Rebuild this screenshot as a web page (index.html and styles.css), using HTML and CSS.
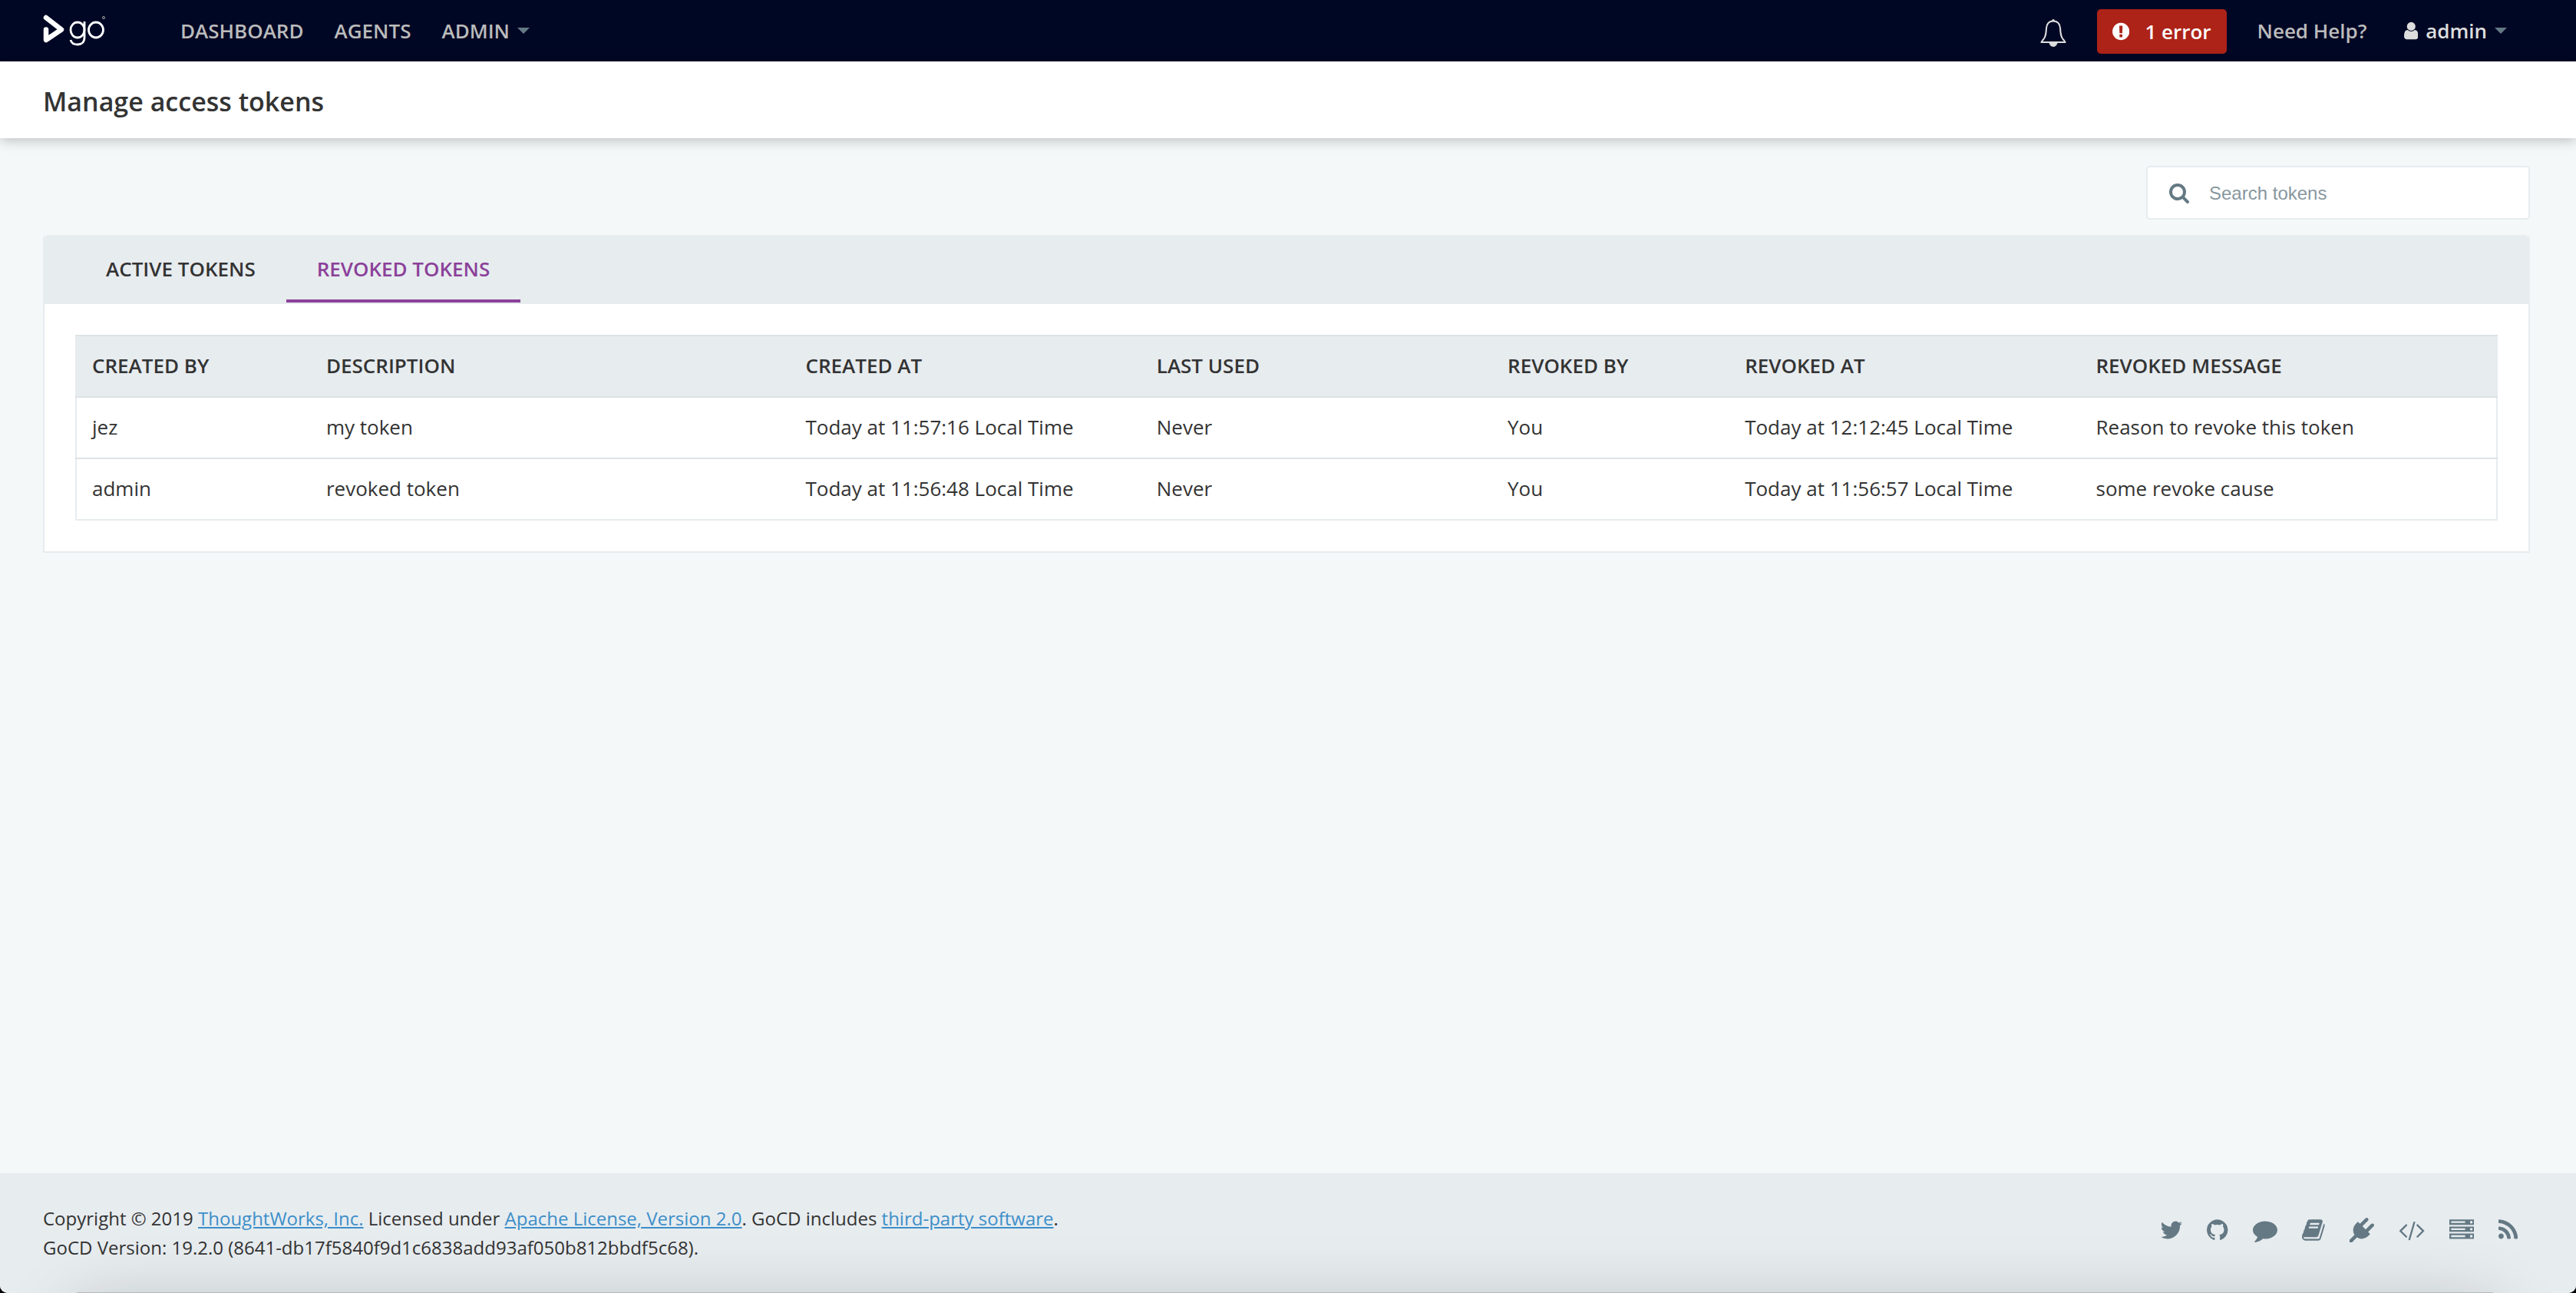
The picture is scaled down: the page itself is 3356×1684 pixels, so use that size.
FILE: index.html
```html
<!DOCTYPE html>
<html lang="en">
<head>
<meta charset="UTF-8">
<title>Manage access tokens - Go</title>
<link rel="stylesheet" href="styles.css">
</head>
<body>

<header class="site-header">
	<a class="logo" href="#" aria-label="Go">
		<svg viewBox="0 0 82 42">
			<path d="M4 4 L24 19.500 L4 33 L4 19.500" fill="none" stroke="#fff" stroke-width="6.500" stroke-linecap="round" stroke-linejoin="round"/>
			<g fill="none" stroke="#fff" stroke-width="2.800">
				<ellipse cx="45" cy="20" rx="9" ry="10"/>
				<path d="M54 9v21c0 6-4 9-9 9s-8-2-9-6"/>
				<ellipse cx="69" cy="20" rx="9.500" ry="10"/>
			</g>
			<circle cx="79" cy="4" r="1.500" fill="none" stroke="#aaa" stroke-width="1"/>
		</svg>
	</a>
	<nav class="main-nav">
		<a href="#">DASHBOARD</a>
		<a href="#">AGENTS</a>
		<a class="has-caret" href="#">ADMIN</a>
	</nav>
	<div class="user-nav">
		<button class="bell" aria-label="Notifications">
			<svg viewBox="0 0 34 38">
				<path d="M17 3.500c-6 0-8.500 4-9 9-.5 8-1 12-4 15-1 1.200-2.500 2.500-2.500 3.500h31c0-1-1.500-2.300-2.500-3.500-3-3-3.500-7-4-15-.5-5-3-9-9-9z" fill="none" stroke="#ddd" stroke-width="2"/>
				<path d="M15 4a2 3 0 0 1 4 0zM11.500 31h11a5.500 6 0 0 1-11 0z" fill="#ddd"/>
			</svg>
		</button>
		<button class="error-btn">
			<svg class="icon" viewBox="128 0 1536 1792"><path d="M896 128q209 0 385.500 103t279.500 279.500 103 385.500-103 385.500-279.500 279.500-385.500 103-385.500-103-279.500-279.500-103-385.500 103-385.500 279.500-279.500 385.500-103zm128 1247v-190q0-14-9-23.500t-22-9.500h-192q-13 0-23 10t-10 23v190q0 13 10 23t23 10h192q13 0 22-9.500t9-23.500zm-2-344l18-621q0-12-10-18-10-8-24-8h-220q-14 0-24 8-10 6-10 18l17 621q0 10 10 17.500t24 7.500h185q14 0 23.500-7.500t10.500-17.500z"/></svg>
			<span>1 error</span>
		</button>
		<a class="help" href="#">Need Help?</a>
		<a class="user has-caret" href="#">
			<svg class="icon" viewBox="256 0 1280 1792"><path d="M1536 1399q0 109-62.500 187t-150.500 78h-854q-88 0-150.500-78t-62.500-187q0-85 8.500-160.500t31.500-152 58.500-131 94-89 134.500-34.500q131 128 313 128t313-128q76 0 134.500 34.500t94 89 58.500 131 31.500 152 8.500 160.500zm-256-887q0 159-112.500 271.500t-271.500 112.500-271.500-112.500-112.500-271.500 112.500-271.500 271.500-112.500 271.500 112.500 112.500 271.500z"/></svg>
			<span>admin</span>
		</a>
	</div>
</header>

<div class="page-header">
	<h1>Manage access tokens</h1>
</div>

<main>
	<div class="search">
		<svg class="icon" viewBox="64 0 1664 1792"><path d="M1216 832q0-185-131.500-316.500t-316.500-131.500-316.500 131.500-131.500 316.500 131.500 316.500 316.500 131.500 316.500-131.500 131.500-316.500zm512 832q0 52-38 90t-90 38q-54 0-90-38l-343-342q-179 124-399 124-143 0-273.500-55.500t-225-150-150-225-55.500-273.500 55.500-273.500 150-225 225-150 273.500-55.500 273.500 55.500 225 150 150 225 55.500 273.500q0 220-124 399l343 343q37 37 37 90z"/></svg>
		<input type="text" placeholder="Search tokens" aria-label="Search tokens">
	</div>

	<section class="panel">
		<div class="tabs">
			<button class="tab">ACTIVE TOKENS</button>
			<button class="tab active">REVOKED TOKENS</button>
		</div>
		<div class="panel-body">
			<table class="tokens">
				<colgroup>
					<col class="col-created-by">
					<col class="col-desc">
					<col class="col-time">
					<col class="col-time">
					<col class="col-revoked-by">
					<col class="col-revoked-at">
					<col>
				</colgroup>
				<thead>
					<tr>
						<th>CREATED BY</th>
						<th>DESCRIPTION</th>
						<th>CREATED AT</th>
						<th>LAST USED</th>
						<th>REVOKED BY</th>
						<th>REVOKED AT</th>
						<th>REVOKED MESSAGE</th>
					</tr>
				</thead>
				<tbody>
					<tr>
						<td>jez</td>
						<td>my token</td>
						<td>Today at 11:57:16 Local Time</td>
						<td>Never</td>
						<td>You</td>
						<td>Today at 12:12:45 Local Time</td>
						<td>Reason to revoke this token</td>
					</tr>
					<tr>
						<td>admin</td>
						<td>revoked token</td>
						<td>Today at 11:56:48 Local Time</td>
						<td>Never</td>
						<td>You</td>
						<td>Today at 11:56:57 Local Time</td>
						<td>some revoke cause</td>
					</tr>
				</tbody>
			</table>
		</div>
	</section>
</main>

<footer class="site-footer">
	<div class="copyright">
		<p>Copyright © 2019 <a href="#">ThoughtWorks, Inc.</a> Licensed under <a href="#">Apache License, Version 2.0</a>. GoCD includes <a href="#">third-party software</a>.</p>
		<p>GoCD Version: 19.2.0 (8641-db17f5840f9d1c6838add93af050b812bbdf5c68).</p>
	</div>
	<div class="social">
		<a href="#" aria-label="Twitter"><svg viewBox="64 0 1664 1792"><path d="M1684 408q-67 98-162 167 1 14 1 42 0 130-38 259.500t-115.500 248.500-184.500 210.500-258 146-323 54.500q-271 0-496-145 35 4 78 4 225 0 401-138-105-2-188-64.500t-114-159.500q33 5 61 5 43 0 85-11-112-23-185.500-111.500t-73.500-205.500v-4q68 38 146 41-66-44-105-115t-39-154q0-88 44-163 121 149 294.500 238.500t371.500 99.500q-8-38-8-74 0-134 94.500-228.500t228.500-94.500q140 0 236 102 109-21 205-78-37 115-142 178 93-10 186-50z"/></svg></a>
		<a href="#" aria-label="GitHub"><svg viewBox="128 0 1536 1792"><path d="M896 128q209 0 385.500 103t279.500 279.500 103 385.500q0 251-146.500 451.500t-378.500 277.500q-27 5-40-7t-13-30q0-3 .5-76.500t.5-134.500q0-97-52-142 57-6 102.500-18t94-39 81-66.500 53-105 20.500-150.500q0-119-79-206 37-91-8-204-28-9-81 11t-92 44l-38 24q-93-26-192-26t-192 26q-16-11-42.500-27t-83.500-38.500-85-13.500q-45 113-8 204-79 87-79 206 0 85 20.500 150t52.500 105 80.500 67 94 39 102.500 18q-39 36-49 103-21 10-45 15t-57 5-65.500-21.500-55.500-62.500q-19-32-48.500-52t-49.500-24l-20-3q-21 0-29 4.500t-5 11.500 9 14 13 12l7 5q22 10 43.500 38t31.500 51l10 23q13 38 44 61.500t67 30 69.500 7 55.500-3.500l23-4q0 38 .5 88.500t.5 54.500q0 18-13 30t-40 7q-232-77-378.500-277.500t-146.500-451.500q0-209 103-385.500t279.500-279.500 385.500-103z"/></svg></a>
		<a href="#" aria-label="Forum"><svg viewBox="0 0 1792 1792"><path d="M1792 896q0 174-120 321.500t-326 233-450 85.500q-70 0-145-8-198 175-460 242-49 14-114 22-17 2-30.500-9t-17.500-29v-1q-3-4-.5-12t2-10 4.500-9.500l6-9 7-8.500 8-9q7-8 31-34.500t34.500-38 31-39.500 32.500-51 27-59 26-76q-157-89-247.500-220t-90.500-281q0-130 71-248.500t191-204.500 286-136.500 348-50.500q244 0 450 85.500t326 233 120 321.500z"/></svg></a>
		<a href="#" aria-label="Documentation"><svg viewBox="64 0 1664 1792"><path d="M1703 478q40 57 18 129l-275 906q-19 64-76.500 107.500t-122.500 43.500h-923q-77 0-148.500-53.500t-99.500-131.500q-24-67-2-127 0-4 3-27t4-37q1-8-3-21.500t-3-19.500q2-11 8-21t16.500-23.500 16.500-23.500q23-38 45-91.500t30-91.500q3-10 .5-30t-.5-28q3-11 17-28t17-23q21-36 42-92t25-90q1-9-2.500-32t.5-28q4-13 22-30.500t22-22.500q19-26 42.500-84.500t27.500-96.500q1-8-3-25.500t-2-26.500q2-8 9-18t18-23 17-21q8-12 16.500-30.500t15-35 16-36 19.500-32 26.500-23.500 36-11.500 47.500 5.500l-1 3q38-9 51-9h761q74 0 114 56t18 130l-274 906q-36 119-71.500 153.500t-128.500 34.500h-869q-27 0-38 15-11 16-1 43 24 70 144 70h923q29 0 56-15.500t35-41.500l300-987q7-22 5-57 38 15 59 43zm-1064 2q-4 13 2 22.500t20 9.500h608q13 0 25.500-9.500t16.500-22.500l21-64q4-13-2-22.500t-20-9.500h-608q-13 0-25.500 9.500t-16.500 22.500zm-83 256q-4 13 2 22.500t20 9.500h608q13 0 25.500-9.500t16.500-22.500l21-64q4-13-2-22.500t-20-9.500h-608q-13 0-25.500 9.500t-16.500 22.500z"/></svg></a>
		<a href="#" aria-label="Plugins"><svg viewBox="0 0 1792 1792"><path d="M1755 453q37 38 37 90.500t-37 90.500l-401 400 150 150-160 160q-163 163-389.500 186.500t-411.500-100.500l-362 362h-181v-181l362-362q-124-185-100.500-411.500t186.500-389.500l160-160 150 150 400-401q38-37 91-37t90 37 37 90.500-37 90.500l-400 401 234 234 401-400q38-37 91-37t90 37z"/></svg></a>
		<a href="#" aria-label="API"><svg viewBox="0 0 1920 1792"><path d="M617 1399l-50 50q-10 10-23 10t-23-10l-466-466q-10-10-10-23t10-23l466-466q10-10 23-10t23 10l50 50q10 10 10 23t-10 23l-393 393 393 393q10 10 10 23t-10 23zm591-1067l-373 1291q-4 13-15.500 19.500t-23.500 2.500l-62-17q-13-4-19.500-15.500t-2.500-24.500l373-1291q4-13 15.500-19.500t23.500-2.500l62 17q13 4 19.500 15.500t2.500 24.500zm657 651l-466 466q-10 10-23 10t-23-10l-50-50q-10-10-10-23t10-23l393-393-393-393q-10-10-10-23t10-23l50-50q10-10 23-10t23 10l466 466q10 10 10 23t-10 23z"/></svg></a>
		<a href="#" aria-label="Server details"><svg viewBox="0 0 1792 1792"><path d="M128 1408h1024v-128h-1024v128zm0-512h1024v-128h-1024v128zm1568 448q0-40-28-68t-68-28-68 28-28 68 28 68 68 28 68-28 28-68zm-1568-960h1024v-128h-1024v128zm1568 448q0-40-28-68t-68-28-68 28-28 68 28 68 68 28 68-28 28-68zm0-512q0-40-28-68t-68-28-68 28-28 68 28 68 68 28 68-28 28-68zm96 832v384h-1792v-384h1792zm0-512v384h-1792v-384h1792zm0-512v384h-1792v-384h1792z"/></svg></a>
		<a href="#" aria-label="Feed"><svg viewBox="192 0 1408 1792"><path d="M576 1344q0 80-56 136t-136 56-136-56-56-136 56-136 136-56 136 56 56 136zm512 123q2 28-17 48-18 21-47 21h-135q-25 0-43-16.500t-20-41.500q-22-229-184.500-391.500t-391.500-184.500q-25-2-41.500-20t-16.500-43v-135q0-29 21-47 17-17 43-17h5q160 13 306 80.500t259 181.500q114 113 181.500 259t80.500 306zm512 2q2 27-18 47-18 20-46 20h-143q-26 0-44.500-17.500t-19.500-42.500q-12-215-101-408.500t-231.500-336-336-231.500-408.500-102q-25-1-42.500-19.500t-17.500-43.500v-143q0-28 20-46 18-18 44-18h3q262 13 501.500 120t425.500 294q187 186 294 425.500t120 501.500z"/></svg></a>
	</div>
</footer>

</body>
</html>
```
FILE: styles.css
```css
* {
	box-sizing: border-box;
}

html {
	background: #000;
}

body {
	display: flex;
	flex-direction: column;
	min-height: 100vh;
	margin: 0;
	background: #f4f8f9;
	border-radius: 0 0 10px 10px;
	overflow: hidden;
	color: #333;
	font-family: "Open Sans", sans-serif;
	font-size: 26px;
	line-height: 38px;
}

a {
	color: inherit;
	text-decoration: none;
}

button {
	border: 0;
	padding: 0;
	background: none;
	color: inherit;
	font: inherit;
	cursor: pointer;
}

svg {
	display: block;
	fill: currentColor;
}

.icon {
	height: 26px;
}

/* top bar */
.site-header {
	display: flex;
	align-items: center;
	height: 80px;
	padding: 0 90px 0 56px;
	background: #000724;
	color: #bbb;
	font-weight: 600;
}

.logo svg {
	width: 82px;
	height: 42px;
}

.main-nav {
	display: flex;
	gap: 40px;
	margin-left: 97px;
}

.has-caret {
	display: flex;
	align-items: center;
	gap: 10px;
}

.has-caret::after {
	content: "";
	border: 8px solid transparent;
	border-top-color: #647984;
	border-bottom: 0;
}

.user-nav {
	display: flex;
	align-items: center;
	margin-left: auto;
}

.bell svg {
	width: 34px;
	height: 38px;
	margin-top: 6px;
}

.error-btn {
	display: flex;
	align-items: center;
	gap: 20px;
	height: 58px;
	margin: 2px 40px 0;
	padding: 0 20px;
	border-radius: 5px;
	background: #ad2318;
	color: #fff;
	font-weight: 600;
}

.user {
	margin-left: 48px;
	color: #ddd;
}

/* page title */
.page-header {
	padding: 28px 56px 24px;
	background: #fff;
	box-shadow: 0 2px 16px rgba(0, 0, 0, 0.25);
}

.page-header h1 {
	margin: 0;
	font-size: 34px;
	font-weight: 600;
	line-height: 48px;
}

main {
	flex: 1;
	padding: 36px 60px 36px 56px;
}

.search {
	display: flex;
	align-items: center;
	width: 500px;
	height: 70px;
	margin: 0 0 20px auto;
	padding: 0 28px;
	gap: 26px;
	border: 2px solid #e7ecef;
	border-radius: 5px;
	background: #fff;
	color: #647984;
}

.search .icon {
	height: 28px;
}

.search input {
	flex: 1;
	min-width: 0;
	border: 0;
	padding: 2px 0 0;
	outline: none;
	background: none;
	font-family: "Liberation Sans", sans-serif;
	font-size: 24px;
}

.search input::placeholder {
	color: #87979f;
}

/* tokens panel */
.panel {
	border: 2px solid #e7ecef;
	border-top: 0;
	border-radius: 5px 5px 0 0;
	background: #fff;
}

.tabs {
	display: flex;
	height: 90px;
	padding: 0 40px 2px;
	border-radius: 5px 5px 0 0;
	background: #e7ecef;
}

.tab {
	padding: 4px 40px 0;
	border-bottom: 4px solid transparent;
	font-weight: 600;
}

.tab.active {
	border-bottom-color: #8b4199;
	color: #8b4199;
}

.panel-body {
	padding: 40px;
}

.tokens {
	width: 100%;
	table-layout: fixed;
	border-collapse: collapse;
	border: 2px solid #e7ecef;
}

.tokens th,
.tokens td {
	padding: 19px 20px 21px;
	text-align: left;
}

.tokens th {
	border-top: 2px solid #dde2e5;
	border-bottom: 2px solid #dde2e5;
	background: #e7ecef;
	font-weight: 600;
}

.tokens tbody tr + tr {
	border-top: 2px solid #dde2e5;
}

.col-created-by {
	width: 9.7%;
}

.col-desc {
	width: 19.8%;
}

.col-time {
	width: 14.5%;
}

.col-revoked-by {
	width: 9.8%;
}

.col-revoked-at {
	width: 14.5%;
}

/* footer */
.site-footer {
	position: relative;
	display: flex;
	justify-content: space-between;
	overflow: hidden;
	padding: 40px 44px 40px 56px;
	background: #e7ecef;
	font-size: 24px;
}

/* dark edge along the bottom of the window */
.site-footer::after {
	content: "";
	position: absolute;
	top: 100%;
	left: 100px;
	right: 108px;
	height: 80px;
	margin-top: -1px;
	background: #b4b9bb;
	box-shadow: 0 24px 90px rgba(0, 0, 0, 0.25);
	pointer-events: none;
}

.copyright p {
	margin: 0;
}

.copyright a {
	color: #3d8fc9;
	text-decoration: underline;
}

.social {
	display: flex;
	align-items: center;
	padding: 0 16px 8px 0;
	color: #647984;
}

.social a {
	padding: 0 16px;
}

.social svg {
	height: 32px;
}
```
